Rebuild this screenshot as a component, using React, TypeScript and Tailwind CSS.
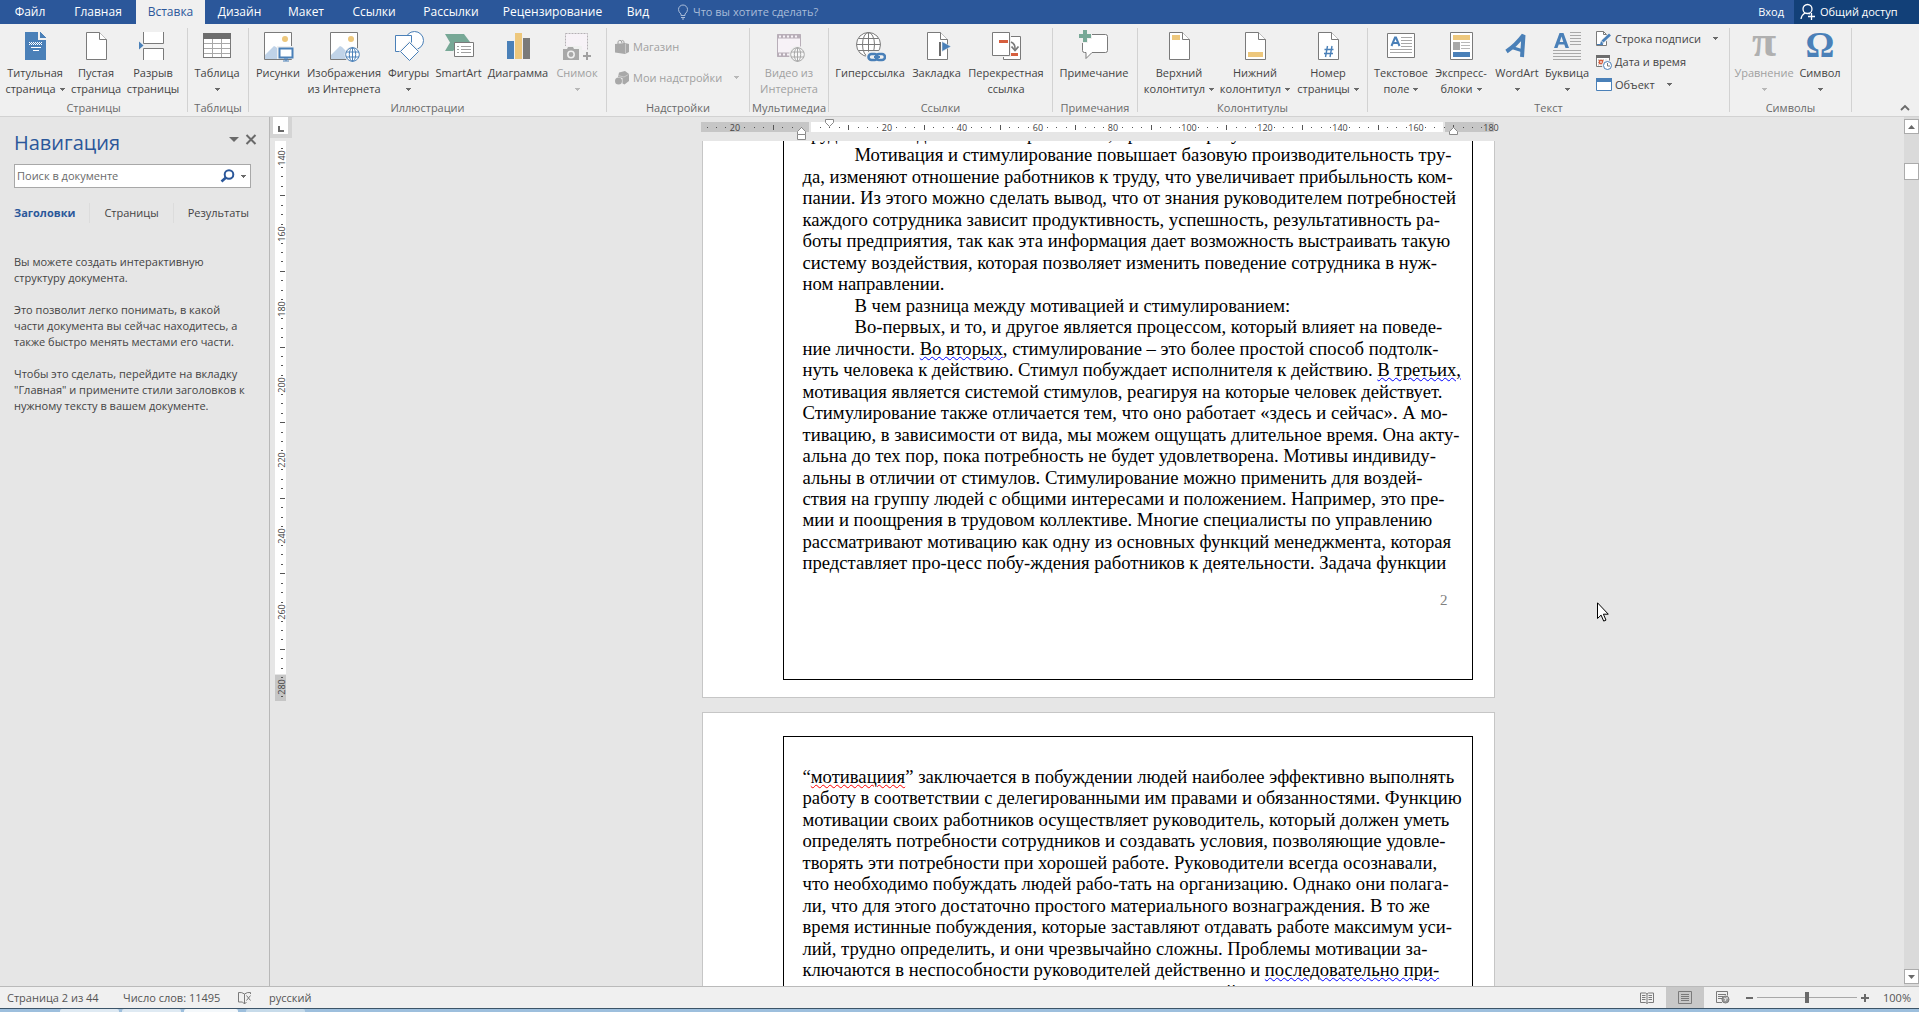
import type { ReactNode } from "react";

const BLUE = "#4a80b8";
const GRAY = "#7a7a7a";
const YELLOW = "#edc77c";
const GREEN = "#77a896";
const RED = "#d65f3e";
const FADED = "#b4b0b4";

/* ---------- icons ---------- */

function Caret({ faded = false }: { faded?: boolean }) {
  return (
    <svg width="5" height="3" viewBox="0 0 5 3" shapeRendering="crispEdges" className="shrink-0">
      <path d="M0 0h5v1H4v1H3v1H2V2H1V1H0z" fill={faded ? "#b8b8b8" : "#6a6a6a"} />
    </svg>
  );
}

function Icon({ children, crisp = true }: { children: ReactNode; crisp?: boolean }) {
  return (
    <svg
      width="32"
      height="32"
      viewBox="0 0 32 32"
      fill="none"
      shapeRendering={crisp ? "crispEdges" : "auto"}
      className="shrink-0"
    >
      {children}
    </svg>
  );
}

function Sheet({ children }: { children?: ReactNode }) {
  return (
    <Icon crisp={false}>
      <path d="M6.5 2.5h13l7 7v20h-20z" fill="#fff" stroke={GRAY} />
      <path d="M19.5 2.5v7h7" fill="#fff" stroke={GRAY} />
      {children}
    </Icon>
  );
}

function Photo({ children }: { children: ReactNode }) {
  return (
    <Icon crisp={false}>
      <path d="M2.5 2.5h27v27h-27z" fill="#fff" stroke={GRAY} />
      <path d="M3 29v-4l9-9 2 1 8 8v4z" fill="#c0d3e8" />
      <circle cx="23" cy="9" r="3" fill={YELLOW} />
      {children}
    </Icon>
  );
}

const icons = {
  cover: (
    <Icon>
      <path d="M6 2h13v8h8v20H6z" fill={BLUE} />
      <path d="M21 2l6 6h-6z" fill={BLUE} />
      <path d="M10 12.5h13M10 14.5h13" stroke="#fff" strokeDasharray="1 1" />
      <path d="M10 13.5h13" stroke="#fff" strokeDasharray="1 1" strokeDashoffset="1" />
      <path d="M12 17.5h10M14 20.5h6" stroke="#fff" />
    </Icon>
  ),
  blank: <Sheet />,
  pageBreak: (
    <Icon crisp={false}>
      <path d="M6 2h20v11H6zM6 19h20v11H6z" fill="#fff" />
      <path d="M6.500 2v11.500h20V2M6.500 30V18.500h20V30" stroke={GRAY} />
      <path d="M2 11.500v8l4.500-4z" fill={BLUE} />
    </Icon>
  ),
  table: (
    <Icon>
      <path d="M2.500 3.500h27v24h-27z" fill="#fff" stroke={GRAY} />
      <path d="M2 3h28v6H2z" fill="#6d6d6d" />
      <path d="M3 13.500h26M3 18.500h26M3 23.500h26M11.500 9v18M20.500 9v18" stroke="#a8a8a8" />
    </Icon>
  ),
  picture: (
    <Photo>
      <path d="M15 16h18v13H15z" fill="#f0f0f0" />
      <path d="M17.500 18.500h13v9h-13z" fill="#fff" stroke={BLUE} strokeWidth="2" />
      <path d="M23 28v2h2v-2M21 31h6" stroke={BLUE} />
    </Photo>
  ),
  online: (
    <Photo>
      <circle cx="24.500" cy="24.500" r="8" fill="#f0f0f0" />
      <circle cx="24.500" cy="24.500" r="6.800" fill="#fff" stroke={BLUE} />
      <ellipse cx="24.500" cy="24.500" rx="3.200" ry="6.800" stroke={BLUE} />
      <path d="M24.500 17.500v14M18 22h13M18 27h13" stroke={BLUE} />
    </Photo>
  ),
  shapes: (
    <Icon crisp={false}>
      <circle cx="21.500" cy="10.500" r="9" fill="#fff" stroke={BLUE} />
      <path d="M2.500 5.500h16v16h-16z" fill="#fff" stroke={BLUE} />
      <path d="M16.500 10.500L27 21 16.500 31.500 6 21z" fill="#f0f0f0" />
      <path d="M16.500 12.500L25.500 21.500l-9 9-9-9z" fill="#fff" stroke={BLUE} />
    </Icon>
  ),
  smartArt: (
    <Icon crisp={false}>
      <path d="M2 4h19l6 8H13v6l-3 3H2l5-8.500z" fill={GREEN} />
      <path d="M11.500 12.500h19v14h-19z" fill="#fff" stroke={GRAY} />
      <path d="M14 16.500h2M18 16.500h10M14 19.500h2M18 19.500h10M14 22.500h2M18 22.500h10" stroke="#a0a0a0" />
    </Icon>
  ),
  chart: (
    <Icon>
      <path d="M5 11h7v18H5z" fill={BLUE} />
      <path d="M13 3h7v26h-7z" fill={YELLOW} />
      <path d="M21 8h7v21h-7z" fill={GRAY} />
    </Icon>
  ),
  screenshot: (
    <Icon crisp={false}>
      <path d="M4.500 3.500h22v22h-22z" fill="#f7f2f7" stroke={FADED} strokeDasharray="2 1" />
      <path d="M1 16h20v15H1z" fill="#f0f0f0" />
      <path d="M2 19h4l1-2h5l1 2h5v11H2z" fill="#a8a8a8" />
      <circle cx="10" cy="24.500" r="3.200" fill="#a8a8a8" stroke="#f0f0f0" strokeWidth="1.500" />
      <path d="M21 20h10v11H21z" fill="#f0f0f0" />
      <path d="M22 26h8M26 22v8" stroke="#a0a0a0" strokeWidth="2" />
    </Icon>
  ),
  video: (
    <Icon crisp={false}>
      <path d="M4.500 4.500h23v22h-23z" fill="#f7f2f7" stroke="#b8aeb8" />
      <path d="M4 6.500h24M4 24.500h13" stroke="#b8aeb8" strokeWidth="4" />
      <path d="M6 6.500h20M6 24.500h11" stroke="#f7f2f7" strokeWidth="2" strokeDasharray="2 2" />
      <circle cx="24.500" cy="24.500" r="8.500" fill="#f0f0f0" />
      <circle cx="24.500" cy="24.500" r="6.800" fill="#f7f7f7" stroke="#a8a8a8" />
      <ellipse cx="24.500" cy="24.500" rx="3.200" ry="6.800" stroke="#a8a8a8" />
      <path d="M24.500 17.500v14M18 22h13M18 27h13" stroke="#a8a8a8" />
    </Icon>
  ),
  hyperlink: (
    <Icon crisp={false}>
      <circle cx="14.500" cy="14.500" r="12" fill="#fff" stroke={GRAY} />
      <ellipse cx="14.500" cy="14.500" rx="6" ry="12" stroke={GRAY} />
      <path d="M14.500 2.500v24M2.500 14.500h24M4.500 8.500h20M4.500 20.500h20" stroke={GRAY} />
      <rect x="12" y="21" width="22" height="11" rx="5" fill="#f0f0f0" />
      <rect x="14.500" y="24" width="9" height="6" rx="3" stroke={BLUE} strokeWidth="2.600" />
      <rect x="22" y="24" width="9" height="6" rx="3" stroke={BLUE} strokeWidth="2.600" />
      <path d="M20 27h6" stroke={BLUE} strokeWidth="2" />
    </Icon>
  ),
  bookmark: (
    <Sheet>
      <path d="M19 12v14" stroke="#6a6a6a" strokeWidth="2" />
      <path d="M21 11.500v10l9-5z" fill={BLUE} stroke="#f0f0f0" strokeWidth=".5" />
    </Sheet>
  ),
  crossRef: (
    <Icon crisp={false}>
      <path d="M13.500 6.500h17v23h-17z" fill="#fff" stroke={GRAY} />
      <path d="M1 1h20v26H1z" fill="#f0f0f0" />
      <path d="M2.500 2.500h17v23h-17z" fill="#fff" stroke={GRAY} />
      <path d="M9 10h9v3H9zM21 23h7v3h-7z" fill={RED} />
      <path d="M21 12q4.500 2 4 7" stroke={GRAY} strokeWidth="1.600" />
      <path d="M21.500 16.500l3.500 4 3.500-4" stroke={GRAY} strokeWidth="1.800" />
    </Icon>
  ),
  comment: (
    <Icon crisp={false}>
      <path d="M6.500 4.500h21q2 0 2 2v14q0 2-2 2H14l-6 6v-6h-1.500q-2 0-2-2v-14" fill="#fff" stroke={GRAY} />
      <path d="M4 0h6v3h4v6h-4v4H2V9H0V3h4z" fill="#f0f0f0" />
      <path d="M5 0h4v4h4v4H9v4H5V8H1V4h4z" fill={GREEN} />
    </Icon>
  ),
  header: (
    <Sheet>
      <path d="M9 5h8v5H9z" fill={YELLOW} />
    </Sheet>
  ),
  footer: (
    <Sheet>
      <path d="M9 22h15v5H9z" fill={YELLOW} />
    </Sheet>
  ),
  pageNumber: (
    <Sheet>
      <path d="M15.500 16l-2 11M20 16l-2 11M12.500 19.500h9M12 23.500h9" stroke={BLUE} strokeWidth="1.400" />
    </Sheet>
  ),
  textBox: (
    <Icon crisp={false}>
      <path d="M2.500 3.500h27v24h-27z" fill="#fff" stroke={GRAY} />
      <path d="M6.500 16l3.500-8.500h1L14.500 16M8 13h5" stroke={BLUE} strokeWidth="2" />
      <path d="M16 7.500h11M16 10.500h11M16 13.500h11M16 16.500h11M5 19.500h22M5 22.500h22" stroke="#a8a8a8" />
    </Icon>
  ),
  quickParts: (
    <Icon crisp={false}>
      <path d="M5.500 2.500h22v27h-22z" fill="#fff" stroke={GRAY} />
      <path d="M8 5h17v5H8z" fill={YELLOW} />
      <path d="M8 12h7v8H8z" fill="#a8a8a8" />
      <path d="M16 12.500h9M16 15.500h9M16 18.500h9" stroke="#b8b8b8" />
      <path d="M8 22h17v5H8z" fill={BLUE} />
    </Icon>
  ),
  wordArt: (
    <Icon crisp={false}>
      <path d="M5.500 21.500Q15 15 22.500 5l-1.500 22" stroke={BLUE} strokeWidth="4" strokeLinejoin="bevel" />
      <path d="M11 17.500l11 3.500" stroke={BLUE} strokeWidth="3" />
    </Icon>
  ),
  dropCap: (
    <Icon crisp={false}>
      <path
        d="M3 18h3.500l1.200-3.500h5.600L14.500 18H18L12.500 3h-4zM8.700 12l1.800-5.500 1.800 5.500z"
        fill={BLUE}
        fillRule="evenodd"
      />
      <path
        d="M19 2.500h11M19 5.500h11M19 8.500h11M19 11.500h11M19 14.500h11M2 20.500h28M2 23.500h28M2 26.500h28M2 29.500h28"
        stroke="#a8a8a8"
      />
    </Icon>
  ),
};

const smallIcons = {
  store: (
    <svg width="16" height="16" viewBox="0 0 16 16" fill="none">
      <path d="M1 5l10-1 4 1v8l-4 2-10-1.500z" fill="#a8a8a8" />
      <path d="M4 5V2.500Q5 1 7 1.500L8 4M7 2.500q2-2 3 0V5" stroke="#a0a0a0" />
      <path d="M11.500 4.500v10" stroke="#c8c8c8" />
    </svg>
  ),
  addins: (
    <svg width="16" height="16" viewBox="0 0 16 16">
      <path d="M5 2.500L11 1l4 3v7l-4.500 3.500-2-1V8L4 7z" fill="#a8a8a8" />
      <circle cx="4.500" cy="11" r="3.500" fill="#a8a8a8" />
      <path d="M4 5.500l6 1.500 4.500-2.500" fill="none" stroke="#c8c8c8" />
    </svg>
  ),
  signature: (
    <svg width="18" height="18" viewBox="0 0 18 18" fill="none">
      <path d="M1.500 1.500h7l3 3v11h-10z" fill="#fff" stroke={GRAY} />
      <path d="M8.500 1.500v3h3" stroke={GRAY} />
      <path d="M7 12.500l8-8" stroke="#f0f0f0" strokeWidth="4.500" />
      <path d="M7.500 11.500L15 4.500" stroke={BLUE} strokeWidth="2.800" />
      <path d="M5 14.500l1-3.500 2.500 2.500z" fill={BLUE} />
      <path d="M2 14.500h6" stroke={BLUE} />
    </svg>
  ),
  dateTime: (
    <svg width="18" height="18" viewBox="0 0 18 18" fill="none">
      <path d="M1.500 2.500h13v11h-13z" fill="#fff" stroke={GRAY} />
      <path d="M1 2h14v3H1z" fill="#6d6d6d" />
      <path d="M3 7h10M3 9.500h10M3 12h10" stroke="#a8a8a8" strokeDasharray="1 1.500" />
      <path d="M4.500 7.500h3v3h-3z" fill="#fff" stroke={RED} strokeWidth="1.500" />
      <circle cx="12.500" cy="12.500" r="5.500" fill="#f0f0f0" />
      <circle cx="12.500" cy="12.500" r="4" fill="#fff" stroke={BLUE} />
      <path d="M12.500 10v3h2.500" stroke={GRAY} />
    </svg>
  ),
  object: (
    <svg width="18" height="18" viewBox="0 0 18 18" fill="none">
      <path d="M1.500 2.500h15v12h-15z" fill="#fff" stroke={BLUE} />
      <path d="M1 2h16v4H1z" fill={BLUE} />
    </svg>
  ),
};

/* ---------- title tabs ---------- */

const tabs = [
  { label: "Файл", width: "w-[60px]" },
  { label: "Главная", width: "w-[76px]" },
  { label: "Вставка", width: "w-[69px]", active: true },
  { label: "Дизайн", width: "w-[69px]" },
  { label: "Макет", width: "w-[64px]" },
  { label: "Ссылки", width: "w-[72px]" },
  { label: "Рассылки", width: "w-[82px]" },
  { label: "Рецензирование", width: "w-[121px]" },
  { label: "Вид", width: "w-[50px]" },
];

function TabBar() {
  return (
    <header className="flex h-6 shrink-0 items-stretch bg-[#2b579a] text-[12px] text-white">
      <nav className="flex">
        {tabs.map((tab) => (
          <button
            key={tab.label}
            className={`${tab.width} whitespace-nowrap text-center ${tab.active ? "bg-[#f0f0f0] text-[#2b579a]" : ""}`}
          >
            {tab.label}
          </button>
        ))}
      </nav>
      <button className="ml-[14px] flex items-center gap-1 text-[11px] text-[#a9bcd9]">
        <svg width="12" height="16" viewBox="0 0 12 16" fill="none" stroke="#a9bcd9">
          <path d="M4 11.500V10Q1.500 8 1.500 5.500a4.500 4.500 0 0 1 9 0Q10.500 8 8 10v1.500zM4 13.500h4M5 15h2" />
        </svg>
        Что вы хотите сделать?
      </button>
      <div className="ml-auto flex text-[11px]">
        <button className="px-[10px]">Вход</button>
        <button className="flex w-[125px] items-center gap-1 bg-[#124078] pl-[6px]">
          <svg width="16" height="18" viewBox="0 0 16 18" fill="none" stroke="#fff" strokeWidth="1.300">
            <circle cx="7.500" cy="6" r="4.500" />
            <path d="M1 16q.5-4 4-6M8.500 10.500l1.500.5M8 13.500h7M11.500 10v7" />
          </svg>
          Общий доступ
        </button>
      </div>
    </header>
  );
}

/* ---------- ribbon ---------- */

type TileProps = {
  icon: ReactNode;
  width: string;
  lines: string[];
  caret?: boolean;
  disabled?: boolean;
};

// The caret trails the second line, or takes its place when there is none.
function Tile({ icon, width, lines, caret, disabled }: TileProps) {
  return (
    <button
      disabled={disabled}
      className={`${width} flex shrink-0 flex-col items-center pt-[6px] whitespace-nowrap ${disabled ? "text-[#a0a0a0]" : ""}`}
    >
      {icon}
      <span className="mt-[3px]">{lines[0]}</span>
      <span className="flex h-4 items-center gap-1">
        {lines[1]}
        {caret && <Caret faded={disabled} />}
      </span>
    </button>
  );
}

function Group({ label, width, children }: { label: string; width: string; children: ReactNode }) {
  return (
    <section className={`${width} flex shrink-0`}>
      <div className="flex flex-1 flex-col">
        <div className="flex h-[76px] shrink-0 pl-[3px]">{children}</div>
        <span className="text-center whitespace-nowrap text-[#6a6a6a]">{label}</span>
      </div>
      <div className="my-1 w-px bg-[#d2d2d2]" />
    </section>
  );
}

type SmallProps = { icon: ReactNode; label: string; caret?: boolean; disabled?: boolean };

function SmallButton({ icon, label, caret, disabled }: SmallProps) {
  return (
    <button disabled={disabled} className={`flex h-[23px] items-center ${disabled ? "text-[#a0a0a0]" : ""}`}>
      <span className="mr-[2px] flex w-[18px] justify-center">{icon}</span>
      <span className="whitespace-nowrap">{label}</span>
      {caret && (
        <span className="ml-3">
          <Caret faded={disabled} />
        </span>
      )}
    </button>
  );
}

function Ribbon() {
  return (
    <div className="flex h-[93px] shrink-0 border-b border-[#d2d2d2] bg-[#f0f0f0]">
      <Group label="Страницы" width="w-[188px]">
        <Tile icon={icons.cover} width="w-[64px]" lines={["Титульная", "страница"]} caret />
        <Tile icon={icons.blank} width="w-[58px]" lines={["Пустая", "страница"]} />
        <Tile icon={icons.pageBreak} width="w-[56px]" lines={["Разрыв", "страницы"]} />
      </Group>
      <Group label="Таблицы" width="w-[61px]">
        <Tile icon={icons.table} width="w-[52px]" lines={["Таблица"]} caret />
      </Group>
      <Group label="Иллюстрации" width="w-[358px]">
        <Tile icon={icons.picture} width="w-[52px]" lines={["Рисунки"]} />
        <Tile icon={icons.online} width="w-[80px]" lines={["Изображения", "из Интернета"]} />
        <Tile icon={icons.shapes} width="w-[49px]" lines={["Фигуры"]} caret />
        <Tile icon={icons.smartArt} width="w-[51px]" lines={["SmartArt"]} />
        <Tile icon={icons.chart} width="w-[68px]" lines={["Диаграмма"]} />
        <Tile icon={icons.screenshot} width="w-[50px]" lines={["Снимок"]} caret disabled />
      </Group>
      <Group label="Надстройки" width="w-[143px]">
        <div className="flex flex-1 flex-col gap-2 pt-[11px] pl-[3px]">
          <SmallButton icon={smallIcons.store} label="Магазин" disabled />
          <SmallButton icon={smallIcons.addins} label="Мои надстройки" caret disabled />
        </div>
      </Group>
      <Group label="Мультимедиа" width="w-[79px]">
        <Tile icon={icons.video} width="w-[72px]" lines={["Видео из", "Интернета"]} disabled />
      </Group>
      <Group label="Ссылки" width="w-[224px]">
        <Tile icon={icons.hyperlink} width="w-[76px]" lines={["Гиперссылка"]} />
        <Tile icon={icons.bookmark} width="w-[57px]" lines={["Закладка"]} />
        <Tile icon={icons.crossRef} width="w-[82px]" lines={["Перекрестная", "ссылка"]} />
      </Group>
      <Group label="Примечания" width="w-[85px]">
        <Tile icon={icons.comment} width="w-[76px]" lines={["Примечание"]} />
      </Group>
      <Group label="Колонтитулы" width="w-[230px]">
        <Tile icon={icons.header} width="w-[76px]" lines={["Верхний", "колонтитул"]} caret />
        <Tile icon={icons.footer} width="w-[76px]" lines={["Нижний", "колонтитул"]} caret />
        <Tile icon={icons.pageNumber} width="w-[70px]" lines={["Номер", "страницы"]} caret />
      </Group>
      <Group label="Текст" width="w-[362px]">
        <Tile icon={icons.textBox} width="w-[60px]" lines={["Текстовое", "поле"]} caret />
        <Tile icon={icons.quickParts} width="w-[60px]" lines={["Экспресс-", "блоки"]} caret />
        <Tile icon={icons.wordArt} width="w-[52px]" lines={["WordArt"]} caret />
        <Tile icon={icons.dropCap} width="w-[48px]" lines={["Буквица"]} caret />
        <div className="flex w-[132px] flex-col pt-[3px] pl-1">
          <SmallButton icon={smallIcons.signature} label="Строка подписи" caret />
          <SmallButton icon={smallIcons.dateTime} label="Дата и время" />
          <SmallButton icon={smallIcons.object} label="Объект" caret />
        </div>
      </Group>
      <Group label="Символы" width="w-[122px]">
        <Tile
          icon={
            <span className="h-8 font-['Liberation_Serif',serif] text-[44px] leading-[24px] font-bold text-[#b0b0b0]">π</span>
          }
          width="w-[62px]"
          lines={["Уравнение"]}
          caret
          disabled
        />
        <Tile
          icon={
            <span className="h-8 font-['Liberation_Serif',serif] text-[36px] leading-[30px] font-bold text-[#4a80b8]">Ω</span>
          }
          width="w-[50px]"
          lines={["Символ"]}
          caret
        />
      </Group>
      <button aria-label="Свернуть ленту" className="ml-auto self-end px-[9px] pb-[4px]">
        <svg width="10" height="8" viewBox="0 0 10 8" fill="none">
          <path d="M1 6l4-4 4 4" stroke="#6a6a6a" strokeWidth="1.800" />
        </svg>
      </button>
    </div>
  );
}

/* ---------- navigation pane ---------- */

function NavigationPane() {
  return (
    <aside className="flex w-[270px] shrink-0 flex-col border-r border-[#b8b8b8] pr-[18px] pl-[14px]">
      <div className="mt-[11px] flex h-[30px] items-center">
        <h2 className="flex-1 text-[20px] leading-[30px] text-[#2b579a]">Навигация</h2>
        <button aria-label="Параметры области" className="mb-2">
          <svg width="10" height="5" viewBox="0 0 10 5">
            <path d="M0 0h10L5 5z" fill="#6a6a6a" />
          </svg>
        </button>
        <button aria-label="Закрыть" className="-mr-[6px] mb-2 ml-[6px]">
          <svg width="12" height="11" viewBox="0 0 12 11">
            <path d="M1.500 1l9 9M10.500 1l-9 9" stroke="#6a6a6a" strokeWidth="2" />
          </svg>
        </button>
      </div>
      <div className="mt-[6px] flex h-6 items-center gap-[6px] border border-[#a8a8a8] bg-white pr-1 pl-[2px]">
        <input
          aria-label="Поиск в документе"
          placeholder="Поиск в документе"
          className="w-0 flex-1 bg-transparent outline-none placeholder:text-[#6a6a6a]"
        />
        <svg width="15" height="14" viewBox="0 0 15 14" fill="none" stroke="#2b579a">
          <circle cx="9" cy="5.500" r="4.300" strokeWidth="2" />
          <path d="M6 8.500l-4.500 4" strokeWidth="2.600" />
        </svg>
        <Caret />
      </div>
      <div className="mt-[15px] flex h-5 items-stretch justify-between pr-[2px] text-[#444]">
        <button className="font-bold text-[#2b579a]">Заголовки</button>
        <span className="w-px bg-[#dcdcdc]" />
        <button>Страницы</button>
        <span className="w-px bg-[#dcdcdc]" />
        <button>Результаты</button>
      </div>
      <div className="mt-[31px] flex flex-col gap-4 whitespace-nowrap text-[#444]">
        <p>
          Вы можете создать интерактивную
          <br />
          структуру документа.
        </p>
        <p>
          Это позволит легко понимать, в какой
          <br />
          части документа вы сейчас находитесь, а
          <br />
          также быстро менять местами его части.
        </p>
        <p>
          Чтобы это сделать, перейдите на вкладку
          <br />
          "Главная" и примените стили заголовков к
          <br />
          нужному тексту в вашем документе.
        </p>
      </div>
    </aside>
  );
}

/* ---------- rulers ---------- */

// Scale: 20 mm is 75.6 px, split into eight ticks with a longer one halfway.
const STEP = 75.6 / 8;

function marks(from: number, to: number) {
  const list = [];
  for (let i = from; i <= to; i++) {
    if (i % 8 !== 0) list.push({ i, long: i % 4 === 0 });
  }
  return list;
}

function HorizontalRuler() {
  const labels = [-20, 20, 40, 60, 80, 100, 120, 140, 160, 180];
  return (
    <svg width="794" height="24" viewBox="0 0 794 24" fill="none" className="overflow-visible">
      <path d="M0 5h793v10H0z" fill="#c6c6c6" />
      <path d="M108 5h636v10H108z" fill="#e6e6e6" />
      <path d="M110 5h632v10H110z" fill="#fff" />
      {marks(-11, 71).map(({ i, long }) => {
        const x = Math.round(109.5 + i * STEP);
        return <path key={i} d={long ? `M${x} 8h1v5h-1z` : `M${x} 10h1v1h-1z`} fill="#555" />;
      })}
      {labels.map((mm) => (
        <text key={mm} x={Math.round(110 + (mm / 20) * 75.6)} y="14" textAnchor="middle" fontSize="9" fill="#444">
          {Math.abs(mm)}
        </text>
      ))}
      <path d="M124.500 2.500h8v3l-4 4-4-4z" fill="#fff" stroke="#8a8a8a" />
      <path d="M96.500 17.500v-3l4-4 4 4v3z" fill="#fff" stroke="#8a8a8a" />
      <path d="M96.500 17.500h8v5h-8z" fill="#fff" stroke="#8a8a8a" />
      <path d="M748.500 17.500v-3l4-4 4 4v3z" fill="#fff" stroke="#8a8a8a" />
    </svg>
  );
}

function VerticalRuler() {
  const labels = [140, 160, 180, 200, 220, 240, 260, 280];
  return (
    <svg width="22" height="560" viewBox="0 0 22 560" fill="none">
      <path d="M5 0h11v533H5z" fill="#fff" />
      <path d="M5 534h11v26H5z" fill="#c6c6c6" />
      {marks(-1, 57).map(({ i, long }) => {
        const y = Math.round(16.5 + i * STEP);
        return <path key={i} d={long ? `M10 ${y}h5v1h-5z` : `M11 ${y}h2v1h-2z`} fill="#555" />;
      })}
      {labels.map((mm) => {
        const y = Math.round(17 + ((mm - 140) / 20) * 75.6);
        return (
          <text key={mm} x="15" y={y} transform={`rotate(-90 15 ${y})`} textAnchor="middle" fontSize="9" fill="#444">
            {mm}
          </text>
        );
      })}
    </svg>
  );
}

/* ---------- document ---------- */

function Grammar({ children }: { children: ReactNode }) {
  return <span className="underline decoration-[#0000ff] decoration-wavy decoration-1 underline-offset-1">{children}</span>;
}

function Spelling({ children }: { children: ReactNode }) {
  return <span className="underline decoration-[#ff0000] decoration-wavy decoration-1 underline-offset-1">{children}</span>;
}

type Line = { text: ReactNode; indent?: boolean };

const firstPage: Line[] = [
  { text: "трудолюбие и деятельность работника, прибыль и результат." },
  { text: "Мотивация и стимулирование повышает базовую производительность тру-", indent: true },
  { text: "да, изменяют отношение работников к труду, что увеличивает прибыльность ком-" },
  { text: "пании. Из этого можно сделать вывод, что от знания руководителем потребностей" },
  { text: "каждого сотрудника зависит продуктивность, успешность, результативность ра-" },
  { text: "боты предприятия, так как эта информация дает возможность выстраивать такую" },
  { text: "систему воздействия, которая позволяет изменить поведение сотрудника в нуж-" },
  { text: "ном направлении." },
  { text: "В чем разница между мотивацией и стимулированием:", indent: true },
  { text: "Во-первых, и то, и другое является процессом, который влияет на поведе-", indent: true },
  {
    text: (
      <>
        ние личности. <Grammar>Во вторых</Grammar>, стимулирование – это более простой способ подтолк-
      </>
    ),
  },
  {
    text: (
      <>
        нуть человека к действию. Стимул побуждает исполнителя к действию. <Grammar>В третьих,</Grammar>
      </>
    ),
  },
  { text: "мотивация является системой стимулов, реагируя на которые человек действует." },
  { text: "Стимулирование также отличается тем, что оно работает «здесь и сейчас». А мо-" },
  { text: "тивацию, в зависимости от вида, мы можем ощущать длительное время. Она акту-" },
  { text: "альна до тех пор, пока потребность не будет удовлетворена. Мотивы индивиду-" },
  { text: "альны в отличии от стимулов. Стимулирование можно применить для воздей-" },
  { text: "ствия на группу людей с общими интересами и положением. Например, это пре-" },
  { text: "мии и поощрения в трудовом коллективе. Многие специалисты по управлению" },
  { text: "рассматривают мотивацию как одну из основных функций менеджмента, которая" },
  { text: "представляет про-цесс побу-ждения работников к деятельности. Задача функции" },
];

const secondPage: Line[] = [
  {
    text: (
      <>
        “<Spelling>мотивациия</Spelling>” заключается в побуждении людей наиболее эффективно выполнять
      </>
    ),
  },
  { text: "работу в соответствии с делегированными им правами и обязанностями. Функцию" },
  { text: "мотивации своих работников осуществляет руководитель, который должен уметь" },
  { text: "определять потребности сотрудников и создавать условия, позволяющие удовле-" },
  { text: "творять эти потребности при хорошей работе. Руководители всегда осознавали," },
  { text: "что необходимо побуждать людей рабо-тать на организацию. Однако они полага-" },
  { text: "ли, что для этого достаточно простого материального вознаграждения. В то же" },
  { text: "время истинные побуждения, которые заставляют отдавать работе максимум уси-" },
  { text: "лий, трудно определить, и они чрезвычайно сложны. Проблемы мотивации за-" },
  {
    text: (
      <>
        ключаются в неспособности руководителей действенно и <Grammar>последовательно при-</Grammar>
      </>
    ),
  },
  { text: "менять имеющиеся методы мотивации и современный" },
];

function Lines({ lines }: { lines: Line[] }) {
  return (
    <div className="font-['Liberation_Serif',serif] text-[14pt] leading-[1.15] whitespace-nowrap text-black">
      {lines.map((line, i) => (
        <p key={i} className={line.indent ? "pl-[52px]" : ""}>
          {line.text}
        </p>
      ))}
    </div>
  );
}

function DocumentView() {
  return (
    <div className="flex min-h-0 flex-1 flex-col items-center justify-start gap-[14px] overflow-hidden">
      <article className="-mt-[19px] w-[793px] shrink-0 border border-[#c6c6c6] bg-white pr-[21px] pb-[17px] pl-20">
        <div className="border border-t-0 border-black pb-[70px] pl-[19px]">
          <Lines lines={firstPage} />
          <p className="mt-[17px] pr-6 text-right font-['Liberation_Serif',serif] text-[15px] leading-[18px] text-[#808080]">
            2
          </p>
        </div>
      </article>
      <article className="w-[793px] shrink-0 border border-[#c6c6c6] bg-white pt-[23px] pr-[21px] pl-20">
        <div className="border border-b-0 border-black pt-[29px] pl-[19px]">
          <Lines lines={secondPage} />
        </div>
      </article>
    </div>
  );
}

function ScrollBar() {
  return (
    <div className="flex w-[15px] shrink-0 flex-col bg-[#dadada] pb-[2px]">
      <button aria-label="Вверх" className="mt-[2px] flex h-[15px] items-center justify-center border border-[#ababab] bg-white">
        <svg width="7" height="4" viewBox="0 0 7 4">
          <path d="M0 4h7L3.500 0z" fill="#6a6a6a" />
        </svg>
      </button>
      <div className="mt-[29px] h-[17px] border border-[#ababab] bg-white" />
      <button aria-label="Вниз" className="mt-auto flex h-[15px] items-center justify-center border border-[#ababab] bg-white">
        <svg width="7" height="4" viewBox="0 0 7 4">
          <path d="M0 0h7L3.500 4z" fill="#6a6a6a" />
        </svg>
      </button>
    </div>
  );
}

/* ---------- status bar ---------- */

function StatusBar() {
  return (
    <footer className="flex h-[22px] shrink-0 items-center border-t border-[#bababa] bg-[#f0f0f0] pl-[7px] text-[#555]">
      <span className="w-[116px]">Страница 2 из 44</span>
      <span className="w-[114px]">Число слов: 11495</span>
      <button aria-label="Правописание" className="w-[32px]">
        <svg width="16" height="14" viewBox="0 0 16 14" fill="none" stroke={GRAY}>
          <path d="M7.500 3Q5 1 1.500 1.500v9.500h4l2 2 2-2M7.500 3v10M7.500 3Q10 1 13.500 1.500V3M9.500 4.500l4 5M13.500 4.500l-4 5" />
        </svg>
      </button>
      <button>русский</button>
      <div className="ml-auto flex items-center">
        <button aria-label="Режим чтения" className="flex h-[21px] w-[38px] items-center justify-center">
          <svg width="14" height="12" viewBox="0 0 14 12" fill="none" stroke={GRAY}>
            <path d="M.5 1h5L7 2l1.500-1h5v9.500h-5L7 11.500l-1.500-1h-5zM7 2v9M2 3.500h3.500M2 5.500h3.500M2 7.500h3.500M8.500 3.500H12M8.500 5.500H12M8.500 7.500H12" />
          </svg>
        </button>
        <button aria-label="Разметка страницы" className="flex h-[21px] w-[38px] items-center justify-center bg-[#c8c8c8]">
          <svg width="14" height="13" viewBox="0 0 14 13" fill="none" stroke={GRAY}>
            <path d="M.5.5h13v12H.5zM3 3.500h8M3 5.500h8M3 7.500h8M3 9.500h8" />
          </svg>
        </button>
        <button aria-label="Веб-документ" className="flex h-[21px] w-[38px] items-center justify-center">
          <svg width="14" height="13" viewBox="0 0 14 13" fill="none" stroke={GRAY}>
            <path d="M6 11.500H.5V.5h11v4M2 3.500h8M2 5.500h5M2 7.500h4" />
            <circle cx="9.500" cy="8.500" r="3.500" fill="#999" />
            <path d="M8 7l2 1-1 2M11 6v2" stroke="#f0f0f0" />
          </svg>
        </button>
        <button aria-label="Уменьшить" className="flex w-[14px] justify-center">
          <span className="h-[2px] w-[7px] bg-[#6a6a6a]" />
        </button>
        <input
          type="range"
          aria-label="Масштаб"
          min={10}
          max={190}
          defaultValue={100}
          className="mx-px h-[13px] w-[100px] appearance-none bg-[linear-gradient(#a8a8a8,#a8a8a8)] bg-[length:100%_1px] bg-center bg-no-repeat [&::-webkit-slider-thumb]:h-[11px] [&::-webkit-slider-thumb]:w-1 [&::-webkit-slider-thumb]:appearance-none [&::-webkit-slider-thumb]:bg-[#6a6a6a]"
        />
        <button aria-label="Увеличить" className="flex w-[14px] justify-center">
          <svg width="8" height="8" viewBox="0 0 8 8">
            <path d="M0 4h8M4 0v8" stroke="#6a6a6a" strokeWidth="2" />
          </svg>
        </button>
        <span className="w-[47px] pr-2 text-right">100%</span>
      </div>
    </footer>
  );
}

function TaskbarEdge() {
  return (
    <div className="flex h-[4px] shrink-0 gap-[3px] border-t border-[#3c5468] bg-[#9dbfdd] pl-[60px]">
      <span className="w-[59px] rounded-t-xs bg-[#dfeaf3]" />
      <span className="w-[59px] rounded-t-xs bg-[#dfeaf3]" />
      <span className="w-[54px] rounded-t-xs bg-[#f4f8fb]" />
      <span className="ml-[5px] w-[59px] rounded-t-xs bg-[#c7dbea]" />
    </div>
  );
}

export default function App() {
  return (
    <div className="flex h-screen flex-col overflow-hidden bg-[#e6e6e6] font-['Open_Sans','Noto_Sans',sans-serif] text-[11px] leading-4 text-[#444]">
      <TabBar />
      <Ribbon />
      <main className="flex min-h-0 flex-1">
        <NavigationPane />
        <div className="flex w-[22px] shrink-0 flex-col overflow-hidden">
          <div className="flex h-[21px] shrink-0 items-start justify-center border-r-4 border-b-4 border-l-[3px] border-[#d4d4d4] bg-white">
            <svg width="7" height="16" viewBox="0 0 7 16" fill="none">
              <path d="M2 9v5h5" stroke="#6a6a6a" strokeWidth="2" />
            </svg>
          </div>
          <div className="mt-[3px]">
            <VerticalRuler />
          </div>
        </div>
        <div className="flex min-w-0 flex-1 flex-col">
          <div className="flex h-6 shrink-0 justify-center">
            <HorizontalRuler />
          </div>
          <DocumentView />
        </div>
        <ScrollBar />
      </main>
      <StatusBar />
      <TaskbarEdge />
      <svg width="12" height="20" viewBox="0 0 12 20" className="pointer-events-none fixed top-[602px] left-[1597px]">
        <path d="M.5.8v15.700l3.600-3.400 2.600 6 2.300-1-2.600-5.900h4.900z" fill="#fff" stroke="#000" />
      </svg>
    </div>
  );
}
